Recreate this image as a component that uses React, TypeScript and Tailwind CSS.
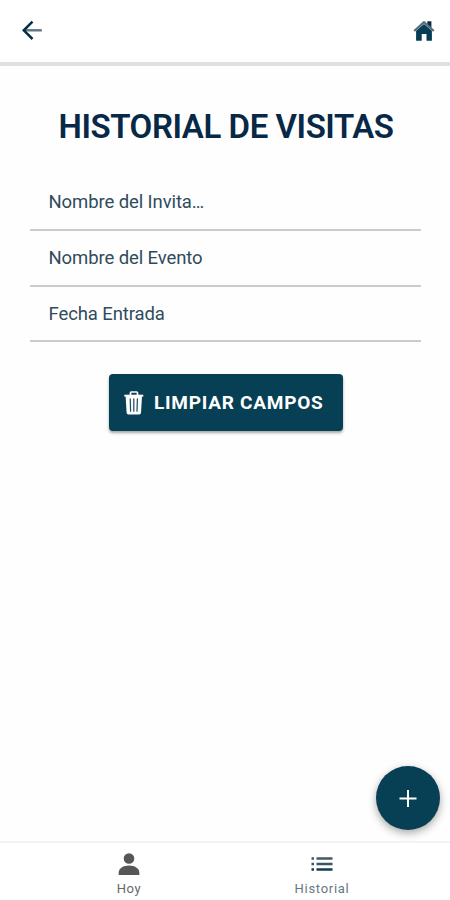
import type { ReactNode } from 'react';

function BackArrow() {
  return (
    <svg width="20" height="20" viewBox="0 0 20 20" fill="none">
      <path d="M1.5 10.3H19.8" stroke="#5f7485" strokeWidth="2.4" />
      <path d="M10.5 1.6L1.8 10.3L10.5 19" stroke="#042f48" strokeWidth="2.5" />
    </svg>
  );
}

function HomeIcon() {
  return (
    <svg width="22" height="22" viewBox="0 0 22 22" fill="none">
      <path d="M14.3 1.3H18.4V9L14.3 5.5Z" fill="#0b2b42" />
      <path d="M3.1 10.8L11 4L18.9 10.8V20.7H13.5V14H8.7V20.7H3.1Z" fill="#053d55" />
      <path d="M1.2 11L11 2.1L20.8 11" stroke="#596f81" strokeWidth="2.2" strokeLinejoin="round" />
    </svg>
  );
}

function TrashIcon() {
  return (
    <svg width="20" height="24" viewBox="0 0 20 24" fill="none">
      <path d="M6.5 4V1.8Q6.5 1 7.3 1H12.7Q13.5 1 13.5 1.8V4" stroke="white" strokeWidth="1.7" />
      <path d="M0.3 3.7H19.3V5.6H0.3Z" fill="white" />
      <path d="M1.6 5H18L17 21.7Q16.9 23.5 15.2 23.5H4.4Q2.7 23.5 2.6 21.7Z" fill="white" />
      <path d="M6.2 7.8L6.6 20.2M9.8 7.8V20.2M13.4 7.8L13 20.2" stroke="#234f64" strokeWidth="1.25" strokeLinecap="round" />
    </svg>
  );
}

function Field({ children, className }: { children: ReactNode; className: string }) {
  return (
    <div className={`border-b-2 border-[#c7cccd] pl-[18.5px] text-[18.5px] leading-6 tracking-[-0.1px] text-[#304b5c] ${className}`}>
      {children}
    </div>
  );
}

export default function App() {
  return (
    <div className="relative flex h-[900px] w-[450px] flex-col overflow-hidden bg-[#fefefe] font-[Roboto,sans-serif]">
      <header className="flex h-[66px] shrink-0 items-start justify-between border-b-4 border-[#e0e0e0] bg-white pr-[15px] pl-[22px] pt-5">
        <button aria-label="Volver"><BackArrow /></button>
        <button aria-label="Inicio"><HomeIcon /></button>
      </header>
      <main className="flex grow flex-col px-[30px]">
        <h1 className="mt-[41px] pl-[2px] text-center text-[33px] leading-10 font-semibold tracking-[-0.43px] whitespace-nowrap text-[#082847]">
          HISTORIAL DE VISITAS
        </h1>
        <div className="mt-[27px] mr-[-1px] flex flex-col">
          <Field className="h-[57px] pt-[16px]">Nombre del Invita…</Field>
          <Field className="h-[56px] pt-[15px]">Nombre del Evento</Field>
          <Field className="h-[55px] pt-[15px]">Fecha Entrada</Field>
        </div>
        <button className="mt-8 ml-[79px] flex h-[57px] w-[234px] items-center rounded-[4px] bg-[#073f55] pl-[15px] text-white shadow-[0_2px_3px_rgba(0,0,0,0.35)]">
          <TrashIcon />
          <span className="ml-[10px] text-[19px] leading-6 font-bold tracking-[0.75px] whitespace-nowrap">LIMPIAR CAMPOS</span>
        </button>
      </main>
      <button aria-label="Agregar" className="absolute top-[766px] left-[375.5px] flex size-16 items-center justify-center rounded-full bg-[#073f55] shadow-[0_3px_8px_rgba(0,0,0,0.35)]">
        <svg width="18" height="18" viewBox="0 0 18 18" fill="none">
          <path d="M0.5 9.5H17.5M9 1V18" stroke="white" strokeWidth="2" />
        </svg>
      </button>
      <nav className="flex h-[59px] shrink-0 border-t-2 border-[#f3f3f3] bg-white pl-[33px] text-[13px] leading-4 text-[#66696b]">
        <button className="flex w-[192px] flex-col items-center pt-[10px]">
          <svg width="22" height="22" viewBox="0 0 22 22" fill="#555759">
            <circle cx="11" cy="5.5" r="5.3" />
            <path d="M0.7 22V19.4C0.7 15.5 5.4 12.6 11 12.6S21.3 15.5 21.3 19.4V22Z" />
          </svg>
          <span className="mt-[6px] tracking-[0.6px]">Hoy</span>
        </button>
        <button className="flex w-[194px] flex-col items-center pt-[10px] text-[#657881]">
          <svg width="22" height="22" viewBox="0 0 22 22" fill="none">
            <path d="M0.5 5.5H3M5.5 5.5H21.5" stroke="#455963" strokeWidth="2.5" />
            <path d="M0.5 11H3M5.5 11H21.5" stroke="#3b5564" strokeWidth="2.5" />
            <path d="M0.5 16.5H3M5.5 16.5H21.5" stroke="#123c50" strokeWidth="2.5" />
          </svg>
          <span className="mt-[6px] tracking-[0.7px]">Historial</span>
        </button>
      </nav>
    </div>
  );
}
